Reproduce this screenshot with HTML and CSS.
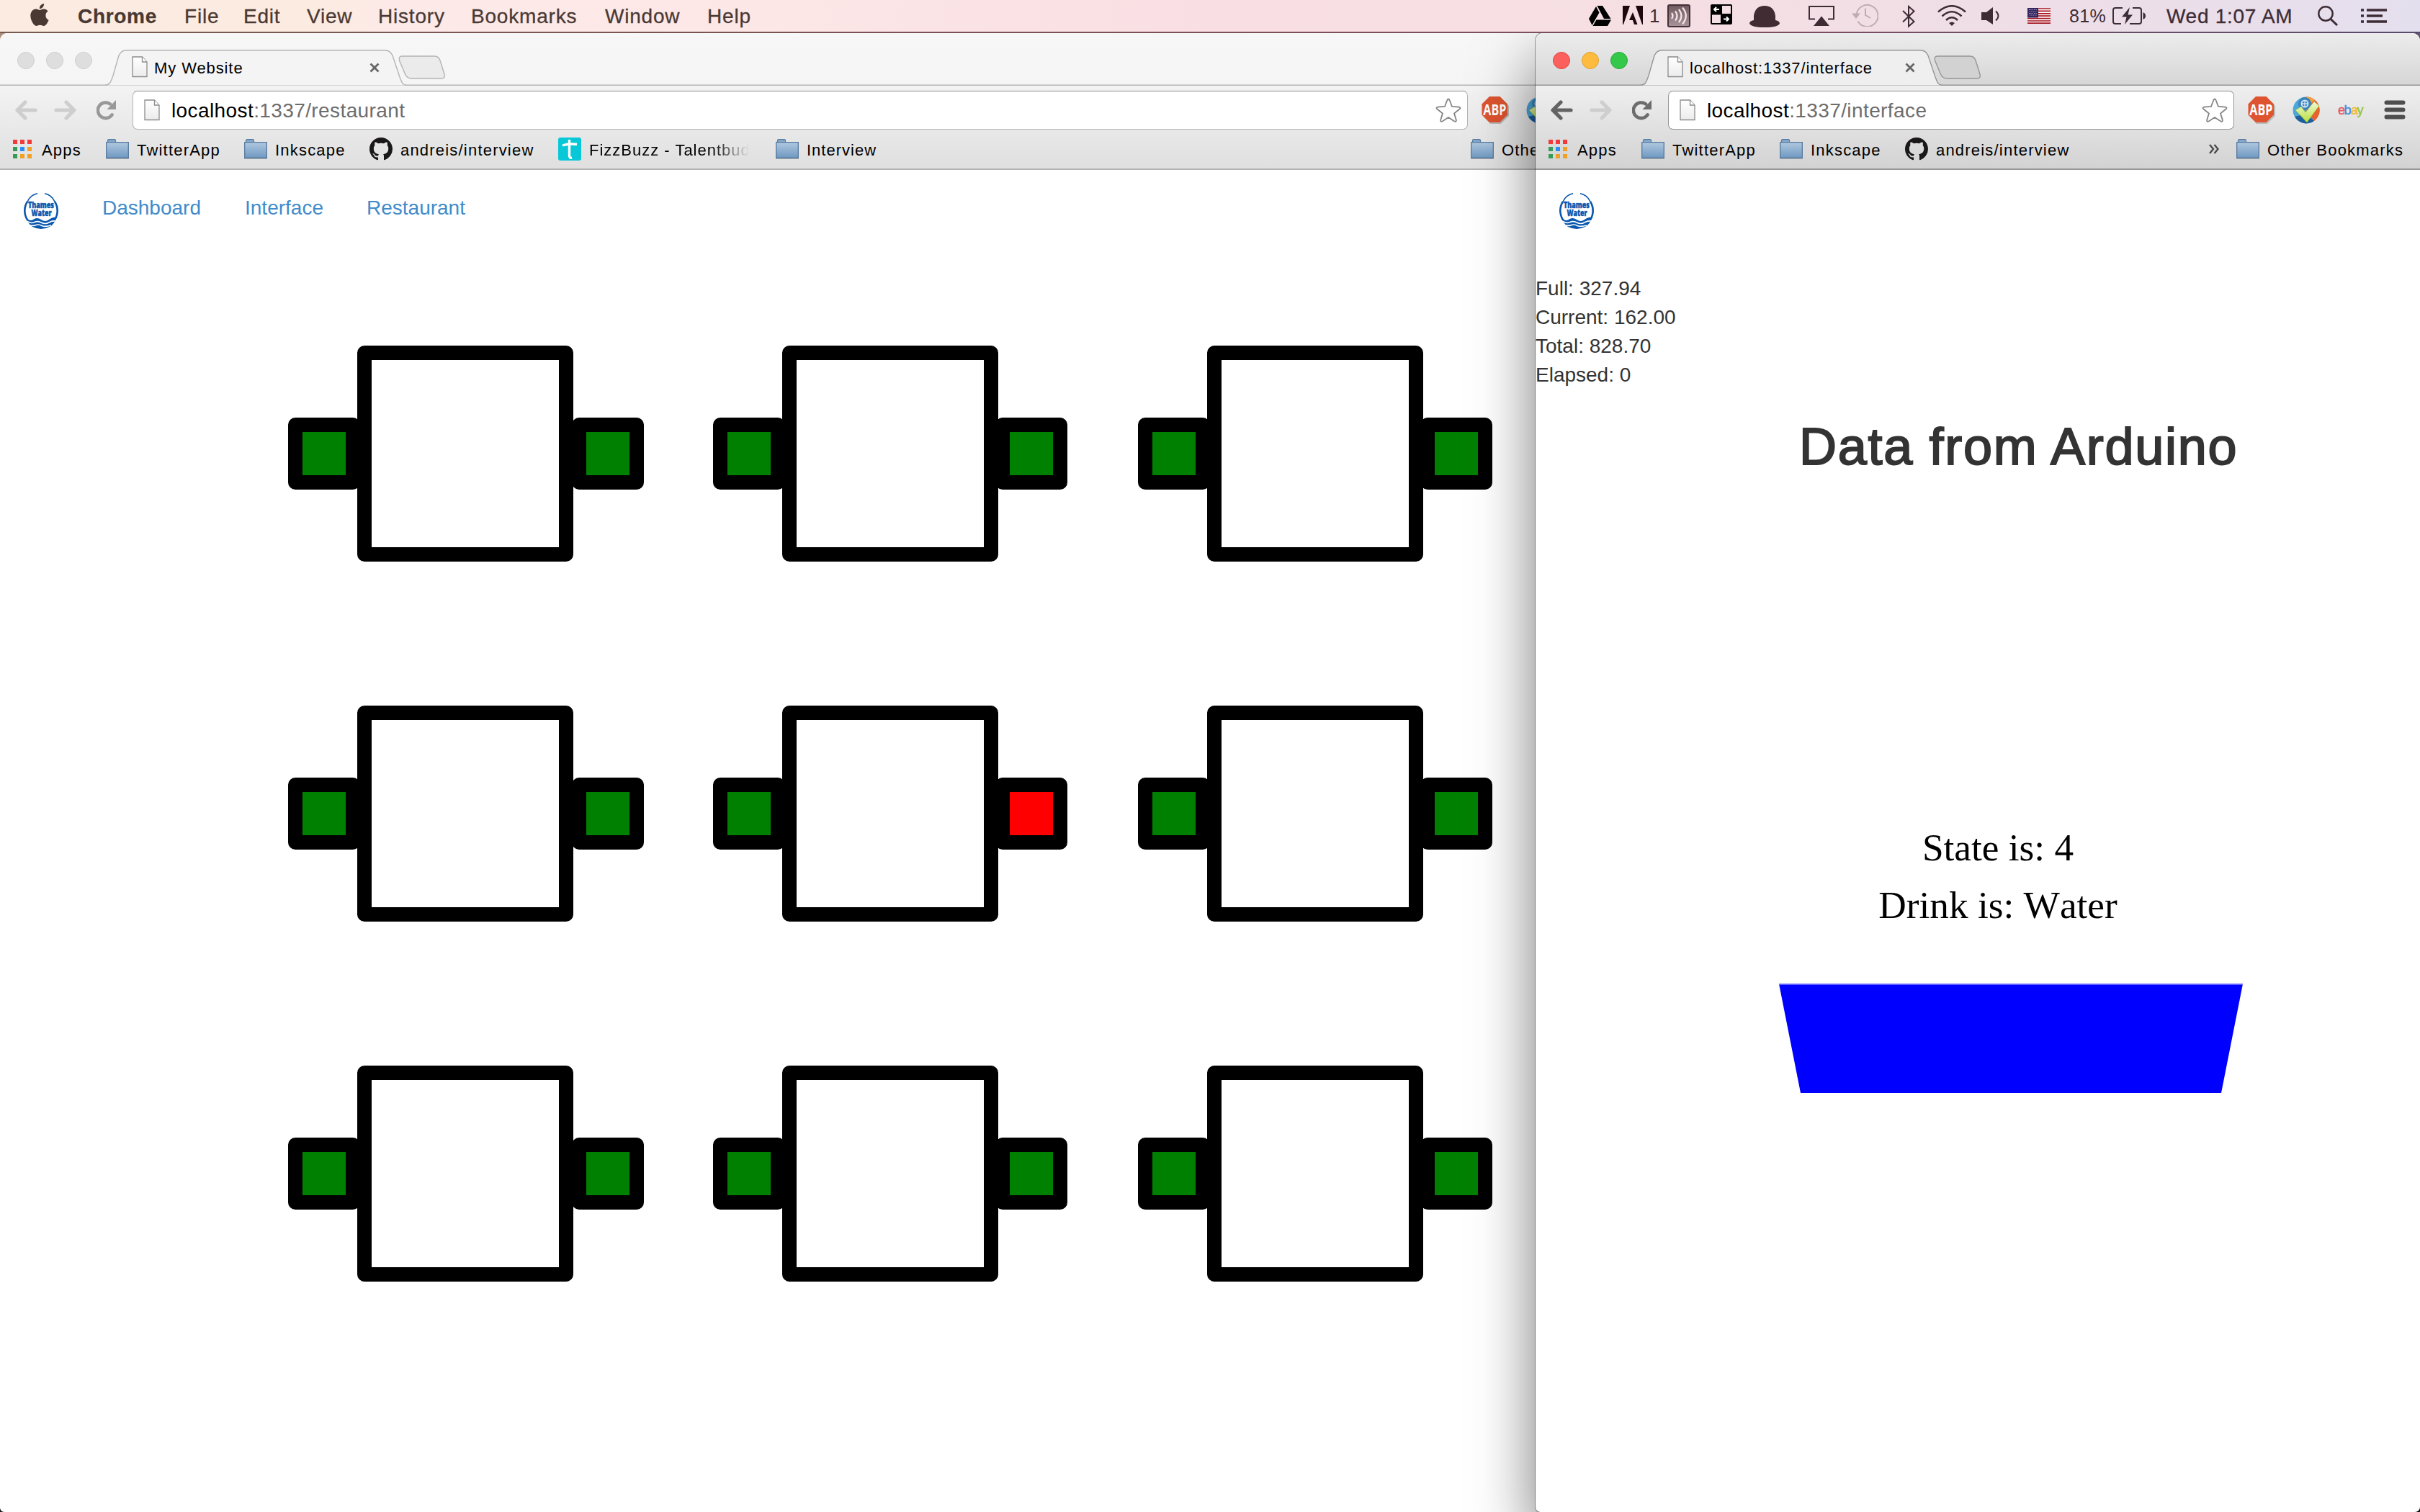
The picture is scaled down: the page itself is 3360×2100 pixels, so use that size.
FILE: index.html
```html
<!DOCTYPE html>
<html lang="en">
<head>
<meta charset="utf-8">
<title>My Website</title>
<link rel="stylesheet" href="styles.css">
</head>
<body>
<svg class="defs" width="0" height="0">
  <defs>
    <linearGradient id="folderFill" x1="0" y1="0" x2="0" y2="1"><stop offset="0" stop-color="#b0c8e0"/><stop offset="1" stop-color="#6f98c0"/></linearGradient>
    <linearGradient id="pageFill" x1="0" y1="0" x2="0" y2="1"><stop offset="0" stop-color="#fff"/><stop offset="1" stop-color="#ececec"/></linearGradient>
    <linearGradient id="nfcFill" x1="0" y1="0" x2="0" y2="1"><stop offset="0" stop-color="#6f5a60"/><stop offset="1" stop-color="#a8959b"/></linearGradient>
    <linearGradient id="checkFill" x1="0" y1="0" x2="0" y2="1"><stop offset="0" stop-color="#f4f8d8"/><stop offset="1" stop-color="#b7e03a"/></linearGradient>
    <symbol id="page" viewBox="0 0 22 30"><path d="M1 1H14.500L21 8V28.500H1Z" fill="url(#pageFill)" stroke="#8c8c8c" stroke-width="1.300"/><path d="M14.500 1V8H21" fill="#fff" stroke="#8c8c8c" stroke-width="1.300"/></symbol>
    <symbol id="tabclose" viewBox="0 0 14 14"><path d="M1.500 1.500L12.500 12.500M12.500 1.500L1.500 12.500" stroke="#666" stroke-width="2.800"/></symbol>
    <symbol id="tab" viewBox="0 0 418 50"><path class="tab-fill" d="M0 49.500C7 49 8 44 11 36L19 8Q22 1 30 .700H388Q396 1 399 8L409 38C412 46 413 49 418 49.500Z"/><path class="tab-line" d="M0 49.200C7 49 8 44 11 36L19 8Q22 1 30 .700H388Q396 1 399 8L409 38C412 46 413 49 418 49.200" fill="none" stroke-width="1.400"/></symbol>
    <symbol id="newtab" viewBox="0 0 66 34"><path class="newtab-shape" d="M5 1H50Q56 1 58 7L64 26Q65.500 32 60 32H19Q12 32 9.500 26L1.500 7Q0 1 5 1Z" stroke-width="1.400"/></symbol>
    <symbol id="arrow" viewBox="0 0 32 28"><path d="M15 3L4 14L15 25M5 14H29" fill="none" stroke="currentColor" stroke-width="5.200" stroke-linecap="round" stroke-linejoin="round"/></symbol>
    <symbol id="reload" viewBox="0 0 28 28"><path d="M21.500 20.500A10.800 10.800 0 1 1 19 5.500" fill="none" stroke="currentColor" stroke-width="4.600" stroke-linecap="round"/><path d="M27 0V13H14.500Z" fill="currentColor"/></symbol>
    <symbol id="star" viewBox="0 0 36 34"><path d="M18 1.500Q19.300 1.500 20 4L23 12L32.500 12.600Q36 13.400 33.500 15.500L26 21.500L28.800 30.500Q29.200 34 26 32.300L18 27L10 32.300Q6.800 34 7.200 30.500L10 21.500L2.500 15.500Q0 13.400 3.500 12.600L13 12L16 4Q16.700 1.500 18 1.500Z" fill="#fff" stroke="#858585" stroke-width="1.800"/></symbol>
    <symbol id="abp" viewBox="0 0 38 38"><path d="M12 2H27L38 13V27L27 38H12L2 27V13Z" fill="#bbb"/><path d="M11 0H25.500L36 10.500V25.500L25.500 36H11L.5 25.500V10.500Z" fill="#de5430"/><text x="18.300" y="26" font-family="Open Sans, sans-serif" font-weight="700" font-size="21" fill="#fff" text-anchor="middle" textLength="32" lengthAdjust="spacingAndGlyphs">ABP</text></symbol>
    <symbol id="globe" viewBox="0 0 38 38"><circle cx="19" cy="19" r="18.500" fill="#4aa7d8"/><path d="M19 .500A18.500 18.500 0 0 1 30 34L19 19Z" fill="#e8622c"/><path d="M19 .500A18.500 18.500 0 0 1 31 5L22 12Z" fill="#f2a23c"/><path d="M3 28A18.500 18.500 0 0 0 30 34L19 24Z" fill="#1f5d9c"/><circle cx="17" cy="10" r="9" fill="#3b83bd"/><circle cx="17" cy="10" r="4.500" fill="none" stroke="#cfe4f5" stroke-width="2"/><path d="M17 5V15M12 10H22" stroke="#cfe4f5" stroke-width="1.400"/><path d="M4 19L12 14L18 22L30 7L37 13L20 36Z" fill="url(#checkFill)" stroke="#8db22e" stroke-width=".6"/></symbol>
    <symbol id="menu" viewBox="0 0 30 28"><path d="M3.500 3.500H26.500M3.500 13.500H26.500M3.500 23.500H26.500" stroke="#4e4e4e" stroke-width="6" stroke-linecap="round"/></symbol>
    <symbol id="apps" viewBox="0 0 26 26"><path d="M0 0h6v6H0zM10 0h6v6h-6zM20 0h6v6h-6z" fill="#f23a3a"/><path d="M0 10h6v6H0zM0 20h6v6H0z" fill="#359b57"/><path d="M10 10h6v6h-6z" fill="#2c8df5"/><path d="M20 10h6v6h-6zM10 20h6v6h-6zM20 20h6v6h-6z" fill="#f0a024"/></symbol>
    <symbol id="folder" viewBox="0 0 32 28"><path d="M2.500 4V2.500Q2.500.700 4 .700H12Q13.500.700 13.500 2.500V4" fill="#86a9cb" stroke="#56799e" stroke-width="1.200"/><path d="M.7 4.700H31.300V26.300H.7Z" fill="url(#folderFill)" stroke="#56799e" stroke-width="1.300"/><path d="M0 27.500H32" stroke="#a9a9a9"/></symbol>
    <symbol id="github" viewBox="0 0 16 16"><path fill="#191717" d="M8 0C3.580 0 0 3.580 0 8c0 3.540 2.290 6.530 5.470 7.590.4.070.55-.17.55-.38 0-.19-.01-.82-.01-1.490-2.010.37-2.530-.49-2.690-.94-.09-.23-.48-.94-.82-1.130-.28-.15-.68-.52-.01-.53.63-.01 1.080.58 1.230.82.72 1.210 1.870.87 2.330.66.07-.52.28-.87.51-1.070-1.780-.2-3.640-.89-3.640-3.950 0-.87.31-1.590.82-2.150-.08-.2-.36-1.020.08-2.120 0 0 .67-.21 2.200.82.64-.18 1.320-.27 2-.27s1.360.09 2 .27c1.530-1.040 2.200-.82 2.200-.82.44 1.100.16 1.920.08 2.120.51.56.82 1.270.82 2.150 0 3.070-1.870 3.750-3.650 3.950.29.25.54.73.54 1.480 0 1.070-.01 1.930-.01 2.200 0 .21.15.46.55.38A8.010 8.010 0 0 0 16 8c0-4.420-3.580-8-8-8z"/></symbol>
    <symbol id="logo" viewBox="0 0 48 50"><path d="M19 .800Q9 3 5 12M29 .800Q39 3 43 12" fill="none" stroke="#0a58ae" stroke-width="1.600"/><path d="M5 12A23.500 23.500 0 0 0 8 41M43 12A23.500 23.500 0 0 1 40 41" fill="none" stroke="#0a58ae" stroke-width="2.600"/><path d="M3 34Q8 40 13 37Q18 33 24 37Q30 41 35 37Q41 33 45 34Q43 43 36 47Q24 53 12 47Q5 42 3 34Z" fill="#0a58ae"/><path d="M4 39Q10 43 15 40.500Q19 38.500 24 41Q30 44 35 41Q39 38.500 44 39M9 45Q14 46 17 44.500Q21 43 25 45.500Q30 47.500 38 45" fill="none" stroke="#fff" stroke-width="1.600"/><g font-family="Open Sans, sans-serif" font-weight="800" fill="#0a58ae" stroke="#0a58ae" stroke-width=".5" text-anchor="middle" font-size="11.500"><text x="24" y="21" textLength="36" lengthAdjust="spacingAndGlyphs">Thames</text><text x="24.500" y="32" textLength="28" lengthAdjust="spacingAndGlyphs">Water</text></g></symbol>
  </defs>
</svg>

<header class="menubar">
  <svg class="apple" viewBox="2.200 0 19.700 24"><path fill="currentColor" d="M12.152 6.896c-.948 0-2.415-1.078-3.960-1.040-2.040.027-3.910 1.183-4.961 3.014-2.117 3.675-.546 9.103 1.519 12.090 1.013 1.454 2.208 3.090 3.792 3.039 1.520-.065 2.090-.987 3.935-.987 1.831 0 2.350.987 3.960.948 1.637-.026 2.676-1.480 3.676-2.948 1.156-1.688 1.636-3.325 1.662-3.415-.039-.013-3.182-1.221-3.220-4.857-.026-3.040 2.480-4.494 2.597-4.559-1.429-2.090-3.623-2.324-4.390-2.376-2-.156-3.675 1.090-4.610 1.090zM15.530 3.830c.843-1.012 1.400-2.427 1.245-3.830-1.207.052-2.662.805-3.532 1.818-.78.896-1.454 2.338-1.273 3.714 1.338.104 2.715-.688 3.559-1.701"/></svg>
  <nav class="menus">
    <b class="m-chrome">Chrome</b><span class="m-file">File</span><span class="m-edit">Edit</span><span class="m-view">View</span><span class="m-history">History</span><span class="m-bookmarks">Bookmarks</span><span class="m-window">Window</span><span>Help</span>
  </nav>
  <div class="status">
    <svg class="s-drive" viewBox="0 0 32 28"><path d="M11 1L1 18L5.500 27L15.500 9.500ZM12.500 0H20L31.500 18H22ZM11.500 19.500H32L27 28H6.500Z" fill="#000"/></svg>
    <svg class="s-adobe" viewBox="0 0 28 26"><path d="M0 0H10L1 26H0ZM18 0H28V26H27ZM14 9L20.500 26H16L14 20H9Z" fill="#1d080e"/></svg>
    <span class="s-count">1</span>
    <svg class="s-nfc" viewBox="0 0 32 32"><rect x="1" y="1" width="30" height="30" rx="2" fill="url(#nfcFill)" stroke="#46313a" stroke-width="2"/><path d="M6 12Q9 16 6 20M11 9.500Q16 16 11 22.500M16 7Q23 16 16 25M21 4.500Q30.500 16 21 27.500" fill="none" stroke="#f7e4e8" stroke-width="2.300"/></svg>
    <svg class="s-grid" viewBox="0 0 30 28"><rect width="30" height="28" rx="2"/><path d="M16 2H28V13H16ZM2 14.500H14V26H2Z" fill="#f4dfe4"/><path d="M12 7H5M8 4L5 7L8 10M18 20.500H25M22 17.500L25 20.500L22 23.500" fill="none" stroke="#fff" stroke-width="2"/></svg>
    <svg class="s-hat" viewBox="0 0 42 30"><path d="M6 20V14Q8 0 21 0Q34 0 36 14V20Q42 21 42 24.500Q40 30 21 30Q2 30 0 24.500Q0 21 6 20Z" fill="#412c34"/></svg>
    <svg class="s-air" viewBox="0 0 36 28"><path d="M9 18.500H1V1H35V18.500H27" fill="none" stroke="currentColor" stroke-width="2"/><path d="M18 14.500L29 28H7Z" fill="currentColor"/></svg>
    <svg class="s-time" viewBox="0 0 37 32"><path d="M6.500 16A15 15 0 1 1 8.500 24.500" fill="none" stroke="#bfabb3" stroke-width="2"/><path d="M0 13.500H12L6 21Z" fill="#bfabb3"/><path d="M19 6.500V16L26 20" fill="none" stroke="#bfabb3" stroke-width="2"/></svg>
    <svg class="s-bt" viewBox="0 0 18 32"><path d="M1 8L16.500 23L9 29.500V2L16.500 8.500L1 23.500" fill="none" stroke="currentColor" stroke-width="2"/></svg>
    <svg class="s-wifi" viewBox="0 0 40 29"><path d="M1 9.500Q20-7 39 9.500M6.500 15.500Q20 3 33.500 15.500M12 21Q20 13.500 28 21" fill="none" stroke="currentColor" stroke-width="2.500"/><path d="M16 25Q20 22 24 25L20 29Z" fill="currentColor"/></svg>
    <svg class="s-vol" viewBox="0 0 25 24"><path d="M0 7H7L16 0V24L7 18H0Z" fill="currentColor"/><path d="M20 5.500Q27 12 20 18.500" fill="none" stroke="currentColor" stroke-width="2"/></svg>
    <svg class="s-flag" viewBox="0 0 32 22"><path fill="#fff" d="M0 0H32V22H0Z"/><path d="M0 1H32M0 4.400H32M0 7.800H32M0 11.200H32M0 14.600H32M0 18H32M0 21.200H32" stroke="#a5121f" stroke-width="1.700"/><path d="M0 0H15V13.500H0Z" fill="#34275f"/><path d="M2 2.500H14M3 5H13M2 7.500H14M3 10H13" stroke="#cfc9e2" stroke-width="1" stroke-dasharray="1 1.400"/></svg>
    <span class="s-pct">81%</span>
    <svg class="s-batt" viewBox="0 0 46 24"><path d="M14 1H4Q1 1 1 4V20Q1 23 4 23H12M28 1H37Q40 1 40 4V20Q40 23 37 23H24" fill="none" stroke="currentColor" stroke-width="2"/><path d="M42.500 7Q46 8.500 46 12Q46 15.500 42.500 17Z M24 0L13 13.500H19.500L17 24L28 10.500H21.500Z" fill="currentColor"/></svg>
    <span class="s-clock">Wed 1:07 AM</span>
    <svg class="s-search" viewBox="0 0 29 28"><circle cx="11" cy="11" r="9.700" fill="none" stroke="currentColor" stroke-width="2.400"/><path d="M17.500 18L27 27" stroke="currentColor" stroke-width="3"/></svg>
    <svg class="s-list" viewBox="0 0 36 20"><path d="M0 2H4M8 2H36M0 10H4M8 10H30M0 18H4M8 18H36" stroke="currentColor" stroke-width="3.600"/></svg>
  </div>
</header>

<section class="window window-back">
  <div class="strip">
    <div class="lights"><i></i><i></i><i></i></div>
    <div class="tab"><svg class="tab-shape"><use href="#tab"/></svg><div class="tab-row"><svg class="tab-page"><use href="#page"/></svg><span class="tab-title">My Website</span><svg class="tab-x"><use href="#tabclose"/></svg></div></div>
    <svg class="newtab"><use href="#newtab"/></svg>
  </div>
  <div class="tools">
    <div class="address">
      <svg class="nav-ico back"><use href="#arrow"/></svg><svg class="nav-ico forward"><use href="#arrow"/></svg><svg class="reload"><use href="#reload"/></svg>
      <div class="omnibox"><svg class="url-page"><use href="#page"/></svg><span class="url">localhost<em>:1337/restaurant</em></span><svg class="star"><use href="#star"/></svg></div>
      <svg class="ext-abp"><use href="#abp"/></svg><svg class="ext-globe"><use href="#globe"/></svg>
    </div>
    <div class="bookmarks">
      <span class="bm bm-apps"><svg class="i-apps"><use href="#apps"/></svg>Apps</span>
      <span class="bm bm-twitter"><svg class="i-folder"><use href="#folder"/></svg>TwitterApp</span>
      <span class="bm bm-ink"><svg class="i-folder"><use href="#folder"/></svg>Inkscape</span>
      <span class="bm bm-git"><svg class="i-git"><use href="#github"/></svg>andreis/interview</span>
      <span class="bm bm-fizz"><svg class="i-git" viewBox="0 0 32 32"><rect width="32" height="32" rx="3" fill="#08c8d8"/><path d="M15.500 3V25Q15.500 29 19 28M6 11Q15 8 26 9.500" fill="none" stroke="#fff" stroke-width="3.400"/></svg><span class="fade">FizzBuzz - Talentbud</span></span>
      <span class="bm"><svg class="i-folder"><use href="#folder"/></svg>Interview</span>
      <span class="bm bm-other"><svg class="i-folder"><use href="#folder"/></svg>Othe</span>
    </div>
  </div>
  <main class="page">
    <nav class="site-nav"><svg class="logo"><use href="#logo"/></svg><a class="n-dash">Dashboard</a><a class="n-int">Interface</a><a>Restaurant</a></nav>
    <div class="floor">
      <div class="group first"><i class="seat"></i><i class="table"></i><i class="seat right"></i></div>
      <div class="group"><i class="seat"></i><i class="table"></i><i class="seat right"></i></div>
      <div class="group"><i class="seat"></i><i class="table"></i><i class="seat right"></i></div>
      <div class="group first"><i class="seat"></i><i class="table"></i><i class="seat right"></i></div>
      <div class="group"><i class="seat"></i><i class="table"></i><i class="seat right busy"></i></div>
      <div class="group"><i class="seat"></i><i class="table"></i><i class="seat right"></i></div>
      <div class="group first"><i class="seat"></i><i class="table"></i><i class="seat right"></i></div>
      <div class="group"><i class="seat"></i><i class="table"></i><i class="seat right"></i></div>
      <div class="group"><i class="seat"></i><i class="table"></i><i class="seat right"></i></div>
    </div>
  </main>
</section>

<section class="window window-front">
  <div class="strip">
    <div class="lights"><i></i><i></i><i></i></div>
    <div class="tab"><svg class="tab-shape"><use href="#tab"/></svg><div class="tab-row"><svg class="tab-page"><use href="#page"/></svg><span class="tab-title">localhost:1337/interface</span><svg class="tab-x"><use href="#tabclose"/></svg></div></div>
    <svg class="newtab"><use href="#newtab"/></svg>
  </div>
  <div class="tools">
    <div class="address">
      <svg class="nav-ico back"><use href="#arrow"/></svg><svg class="nav-ico forward"><use href="#arrow"/></svg><svg class="reload"><use href="#reload"/></svg>
      <div class="omnibox"><svg class="url-page"><use href="#page"/></svg><span class="url">localhost<em>:1337/interface</em></span><svg class="star"><use href="#star"/></svg></div>
      <svg class="ext-abp"><use href="#abp"/></svg><svg class="ext-globe"><use href="#globe"/></svg>
      <span class="ext-ebay"><span class="e">e</span><span class="b">b</span><span class="a">a</span><span class="y">y</span></span>
      <svg class="ext-menu"><use href="#menu"/></svg>
    </div>
    <div class="bookmarks">
      <span class="bm bm-apps"><svg class="i-apps"><use href="#apps"/></svg>Apps</span>
      <span class="bm bm-twitter"><svg class="i-folder"><use href="#folder"/></svg>TwitterApp</span>
      <span class="bm bm-ink"><svg class="i-folder"><use href="#folder"/></svg>Inkscape</span>
      <span class="bm bm-git"><svg class="i-git"><use href="#github"/></svg>andreis/interview</span>
      <svg class="more" viewBox="0 0 14 14"><path d="M1 1L6 7L1 13M7.500 1L12.500 7L7.500 13" fill="none" stroke="#4a4a4a" stroke-width="2.400"/></svg>
      <span class="bm bm-other"><svg class="i-folder"><use href="#folder"/></svg>Other Bookmarks</span>
    </div>
  </div>
  <main class="page">
    <nav class="site-nav"><svg class="logo"><use href="#logo"/></svg></nav>
    <div class="stats"><div>Full: 327.94</div><div>Current: 162.00</div><div>Total: 828.70</div><div>Elapsed: 0</div></div>
    <h1 class="heading">Data from Arduino</h1>
    <div class="readout"><div>State is: 4</div><div>Drink is: Water</div></div>
    <svg class="cup" viewBox="0 0 644 153"><path d="M0 1.500H644L614 153H30Z" fill="#00f"/><path d="M0 1.500H644" stroke="#aaf" stroke-width="2"/></svg>
  </main>
</section>
</body>
</html>
```
FILE: styles.css
```css
* { box-sizing: border-box; }
html, body { margin: 0; height: 2100px; overflow: hidden; }
body {
  position: relative;
  width: 3360px;
  font-family: "Liberation Sans", Arial, sans-serif;
  font-size: 28px;
  background: linear-gradient(transparent 50%, #1c1a1e), linear-gradient(90deg, #a98c7a, #6d5c86);
}
svg { display: block; flex: none; }
.defs { position: absolute; }
span, b, a { white-space: nowrap; }

/* menu bar */
.menubar {
  position: absolute; left: 0; top: 0; z-index: 5;
  width: 3360px; height: 46px; padding: 0 46px 2px 42px;
  display: flex; align-items: center;
  color: #4a3933; line-height: 44px;
  background:
    linear-gradient(90deg, #775a50, #7c4f58 50%, #7a4e60 75%, #584a6c) bottom / 100% 2px no-repeat,
    linear-gradient(90deg, #fbebe0 0, #fcebe1 13%, #fdeae8 16%, #fde8e7 28%, #f9dfe3 50%, #f6dfe3 68%, #eedee7 85%, #e4dfee 100%);
}
.apple { width: 26px; height: 31px; margin-bottom: 4px; }
.menus { display: flex; margin: 1px 0 0 40px; letter-spacing: .8px; -webkit-text-stroke: .3px; }
.m-chrome { width: 148px; letter-spacing: .7px; }
.m-file { width: 82px; }
.m-edit { width: 88px; }
.m-view { width: 99px; }
.m-history { width: 129px; }
.m-bookmarks { width: 186px; }
.m-window { width: 142px; }
.status { display: flex; align-items: center; margin-left: auto; color: #3e2c35; }
.s-drive { width: 32px; height: 28px; }
.s-adobe { width: 28px; height: 26px; margin: 0 0 2px 16px; }
.s-count { width: 14px; margin: 0 0 0 9px; font-size: 26px; }
.s-nfc { width: 32px; height: 32px; margin-left: 11px; }
.s-grid { width: 30px; height: 28px; margin: 0 0 4px 28px; }
.s-hat { width: 42px; height: 30px; margin: 2px 0 0 24px; }
.s-air { width: 36px; height: 28px; margin-left: 40px; }
.s-time { width: 37px; height: 32px; margin: 0 0 2px 24px; }
.s-bt { width: 18px; height: 32px; margin: 2px 0 0 33px; }
.s-wifi { width: 40px; height: 29px; margin: 0 0 1px 31px; }
.s-vol { width: 25px; height: 24px; margin-left: 21px; }
.s-flag { width: 32px; height: 22px; margin-left: 39px; }
.s-pct { width: 60px; margin: -1px 0 0 26px; font-size: 25px; letter-spacing: .4px; }
.s-batt { width: 46px; height: 24px; }
.s-clock { width: 181px; margin: 1px 0 0 29px; letter-spacing: .7px; -webkit-text-stroke: .3px; }
.s-search { width: 29px; height: 28px; margin-left: 29px; }
.s-list { width: 36px; height: 20px; margin-left: 31px; }

/* browser windows */
.window { position: absolute; top: 46px; height: 2054px; overflow: hidden; display: flex; flex-direction: column; background: #fff; }
.window-back { left: 0; width: 2296px; border-radius: 10px 10px 0 6px; --line: #b4b4b4; --tab: #f4f4f4; --new: #ebebeb; }
.window-front { left: 2132px; width: 1228px; border-radius: 10px 10px 7px 7px; box-shadow: 0 0 0 1px rgba(0,0,0,.36), 0 40px 84px rgba(0,0,0,.54); --line: #969696; --tab: #efefef; --new: #d2d2d2; }
.strip { height: 73px; display: flex; align-items: flex-end; background: linear-gradient(#f7f7f7, #f5f5f5); box-shadow: inset 0 -1.500px var(--line); flex: none; }
.window-front .strip { background: linear-gradient(#ececec, #d6d6d6); }
.lights { display: flex; gap: 16px; width: 122px; margin: 0 0 23px 24px; }
.lights i { width: 24px; height: 24px; border-radius: 50%; background: #dedede; border: 1px solid #cfcfcf; }
.window-front .lights i:nth-child(1) { background: #fc605c; border-color: #e2443f; }
.window-front .lights i:nth-child(2) { background: #fdbc40; border-color: #e0a030; }
.window-front .lights i:nth-child(3) { background: #34c84a; border-color: #25ab38; }
.tab { display: grid; width: 418px; height: 50px; }
.tab > * { grid-area: 1 / 1; }
.tab-shape { width: 418px; height: 50px; }
.tab-fill { fill: var(--tab); }
.tab-line { stroke: var(--line); }
.tab-row { display: flex; align-items: center; padding: 0 37px 3px 37px; z-index: 1; font-size: 22px; letter-spacing: .9px; }
.tab-page { width: 22px; height: 30px; }
.tab-title { margin: 4px auto 0 9px; }
.tab-x { width: 14px; height: 14px; margin-top: 3px; }
.newtab { width: 66px; height: 34px; margin: 0 0 8px -11px; }
.newtab-shape { fill: var(--new); stroke: var(--line); }
.tools { height: 117px; padding-top: 7px; background: linear-gradient(#f3f3f3, #dfdfdf); box-shadow: inset 0 -2px var(--line); flex: none; }
.window-front .tools { background: linear-gradient(#efefef, #d2d2d2); }
.address { display: flex; align-items: center; height: 54px; padding-left: 20px; }
.nav-ico { width: 32px; height: 28px; color: #cecece; }
.window-front .back { color: #636363; }
.forward { margin-left: 23px; transform: scaleX(-1); }
.reload { width: 28px; height: 28px; margin-left: 27px; color: #989898; }
.window-front .reload { color: #6c6c6c; }
.omnibox { display: flex; align-items: center; height: 54px; margin-left: 22px; padding: 0 8px 0 15px; border: 1.500px solid var(--line); border-top-color: #8e8e8e; border-radius: 7px; background: #fff; }
.window-back .omnibox { width: 1854px; }
.window-front .omnibox { width: 786px; }
.url-page { width: 22px; height: 30px; }
.url { margin: 2px auto 0 16px; color: #000; letter-spacing: .4px; }
.url em { font-style: normal; color: #6d6d6d; }
.star { width: 36px; height: 34px; }
.ext-abp { width: 38px; height: 38px; margin-left: 19px; }
.ext-globe { width: 38px; height: 38px; margin-left: 24px; }
.ext-ebay { width: 35px; margin-left: 25px; font-size: 18px; letter-spacing: -1.200px; line-height: 24px; -webkit-text-stroke: .6px; opacity: .85; }
.e { color: #e8434f; } .b { color: #2b7fe0; } .a { color: #f5b51e; } .y { color: #8ac02c; }
.ext-menu { width: 30px; height: 28px; margin-left: 29px; }
.bookmarks { display: flex; align-items: center; height: 56px; padding: 0 0 2px 18px; font-size: 22px; letter-spacing: 1.200px; color: #000; }
.bm { display: flex; align-items: center; flex: none; line-height: 30px; padding-top: 3px; }
.bm svg { margin-top: -4px; }
.i-apps { width: 26px; height: 26px; margin-right: 14px; }
.i-folder { width: 32px; height: 28px; margin-right: 11px; }
.i-git { width: 32px; height: 32px; margin-right: 11px; }
.bm-apps { width: 129px; }
.bm-twitter { width: 192px; }
.bm-ink { width: 174px; }
.bm-git { width: 262px; }
.bm-fizz { width: 302px; letter-spacing: 1px; }
.bm-fizz + .bm { letter-spacing: 1px; }
.fade { -webkit-mask-image: linear-gradient(90deg, #000 76%, transparent 99%); mask-image: linear-gradient(90deg, #000 76%, transparent 99%); }
.more { width: 14px; height: 14px; margin: 0 24px 0 auto; }
.bm-other { width: 255px; }
.window-back .bm-other { margin-left: auto; width: 254px; }

/* page content */
.page { flex: 1; color: #333; }
.site-nav { display: flex; height: 144px; padding: 32px 0 0 33px; line-height: 41px; }
.site-nav a { color: #428bca; }
.logo { width: 48px; height: 50px; margin-right: 61px; }
.n-dash { width: 198px; }
.n-int { width: 169px; }
.floor { display: grid; grid-template-columns: repeat(3, 590px); row-gap: 200px; padding: 100px 0 0 400px; }
.group { display: flex; align-items: center; height: 300px; }
.table { width: 300px; height: 300px; border: 20px solid #000; border-radius: 10px; margin-left: -4px; background: #fff; flex: none; }
.seat { width: 100px; height: 100px; border: 20px solid #000; border-radius: 10px; background: #008000; flex: none; }
.seat.right { margin-left: -4px; }
.first .seat.right { margin-left: -2px; }
.seat.busy { background: #f00; }
.stats { line-height: 40px; padding-top: 1px; }
.heading { margin: 39px 0 0 366px; font-size: 72px; line-height: 80px; font-weight: 400; letter-spacing: 1.700px; -webkit-text-stroke: 2px #333; white-space: nowrap; }
.readout { width: 1284px; margin-top: 478px; font: 53.300px/80px "Liberation Serif", "Times New Roman", serif; font-kerning: none; color: #000; text-align: center; }
.cup { width: 644px; height: 153px; margin: 67px 0 0 338px; }
```
